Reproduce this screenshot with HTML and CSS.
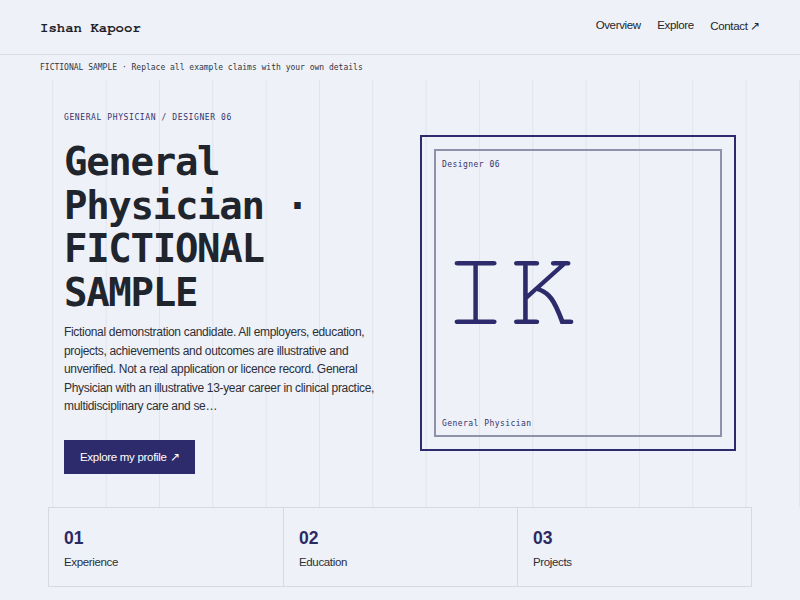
FILE: index.html
```html
<!DOCTYPE html>
<html lang="en">
<head>
<meta charset="utf-8">
<title>Ishan Kapoor</title>
<link rel="stylesheet" href="styles.css">
</head>
<body>
<header class="site-header">
  <div class="logo">Ishan Kapoor</div>
  <nav class="nav">
    <a href="#overview">Overview</a>
    <a href="#explore">Explore</a>
    <a href="#contact">Contact ↗</a>
  </nav>
</header>
<div class="banner">FICTIONAL SAMPLE · Replace all example claims with your own details</div>
<section class="hero">
  <div class="hero-inner">
    <div class="hero-copy">
      <p class="eyebrow">GENERAL PHYSICIAN / DESIGNER 06</p>
      <h1 class="headline">General Physician · FICTIONAL SAMPLE</h1>
      <p class="lead">Fictional demonstration candidate. All employers, education, projects, achievements and outcomes are illustrative and unverified. Not a real application or licence record. General Physician with an illustrative 13-year career in clinical practice, multidisciplinary care and se…</p>
      <a class="btn" href="#profile">Explore my profile ↗</a>
    </div>
    <div class="card">
      <div class="card-inner">
        <span class="card-label">Designer 06</span>
        <span class="monogram">IK</span>
        <span class="card-label">General Physician</span>
      </div>
    </div>
  </div>
</section>
<section class="stats">
  <div class="stat"><div class="stat-num">01</div><div class="stat-label">Experience</div></div>
  <div class="stat"><div class="stat-num">02</div><div class="stat-label">Education</div></div>
  <div class="stat"><div class="stat-num">03</div><div class="stat-label">Projects</div></div>
</section>
</body>
</html>
```

FILE: styles.css
```css
* { box-sizing: border-box; }

html, body {
  margin: 0;
  background: #eef1f7;
}

body {
  font-family: "Liberation Sans", Arial, sans-serif;
  color: #262930;
}

a { color: inherit; text-decoration: none; }

.site-header {
  display: flex;
  justify-content: space-between;
  align-items: center;
  height: 55px;
  padding: 0 40px;
  border-bottom: 1px solid #d9dce3;
}

.logo {
  font-family: "FreeMono", "Nimbus Mono PS", "Courier New", "Liberation Mono", monospace;
  font-weight: 700;
  font-size: 14px;
  color: #1d2027;
  padding-top: 2px;
}

.nav {
  display: flex;
  gap: 16.5px;
  font-size: 11.5px;
  letter-spacing: -0.35px;
  color: #22252c;
  padding-bottom: 2px;
}

.banner {
  display: flex;
  align-items: center;
  height: 25px;
  padding: 0 40px;
  font-family: "DejaVu Sans Mono", monospace;
  font-size: 8px;
  color: #33363f;
}

.hero {
  padding: 32px 64px 33px;
  background-image: linear-gradient(to right, transparent calc(100% - 1px), #e1e4eb calc(100% - 1px));
  background-size: calc(100% / 15) 100%;
}

.hero-inner {
  display: grid;
  grid-template-columns: 1fr 1fr;
  gap: 40px;
  align-items: center;
}

.eyebrow {
  margin: 0 0 16px;
  font-family: "DejaVu Sans Mono", monospace;
  font-size: 8px;
  line-height: 12px;
  letter-spacing: 0.6px;
  color: #353370;
}

.headline {
  margin: 0;
  font-family: "DejaVu Sans Mono", monospace;
  font-weight: 700;
  font-size: 39px;
  letter-spacing: -1.3px;
  line-height: 43.5px;
  color: #20242c;
}

.lead {
  margin: 9px 0 0;
  font-size: 12px;
  letter-spacing: -0.32px;
  line-height: 18.6px;
  color: #2c2f37;
}

.btn {
  display: inline-flex;
  align-items: center;
  height: 34px;
  margin-top: 24px;
  padding: 0 16px;
  background: #2d2b6b;
  color: #ffffff;
  font-size: 11.5px;
  letter-spacing: -0.3px;
}

.card {
  aspect-ratio: 1 / 1;
  border: 2px solid #2d2b6b;
  padding: 12px;
}

.card-inner {
  height: 100%;
  border: 2px solid #8f90aa;
  padding: 8px 6px 5px;
  display: flex;
  flex-direction: column;
  justify-content: space-between;
}

.card-label {
  font-family: "DejaVu Sans Mono", monospace;
  font-size: 8px;
  line-height: 12px;
  letter-spacing: 0.45px;
  color: #353370;
}

.monogram {
  font-family: "FreeMono", "Nimbus Mono PS", "Courier New", "Liberation Mono", monospace;
  font-size: 112px;
  line-height: 1;
  padding-bottom: 9px;
  color: #2d2b6b;
}

.stats {
  display: grid;
  grid-template-columns: repeat(3, 1fr);
  margin: 0 48px;
  border: 1px solid #d6d9e0;
}

.stat {
  padding: 20px 15px 15px;
}

.stat + .stat {
  border-left: 1px solid #d6d9e0;
}

.stat-num {
  font-weight: 700;
  font-size: 17.5px;
  line-height: 21.6px;
  color: #2b2963;
}

.stat-label {
  margin-top: 3px;
  font-size: 11.5px;
  letter-spacing: -0.35px;
  line-height: 18px;
  color: #2c2f37;
}
```
